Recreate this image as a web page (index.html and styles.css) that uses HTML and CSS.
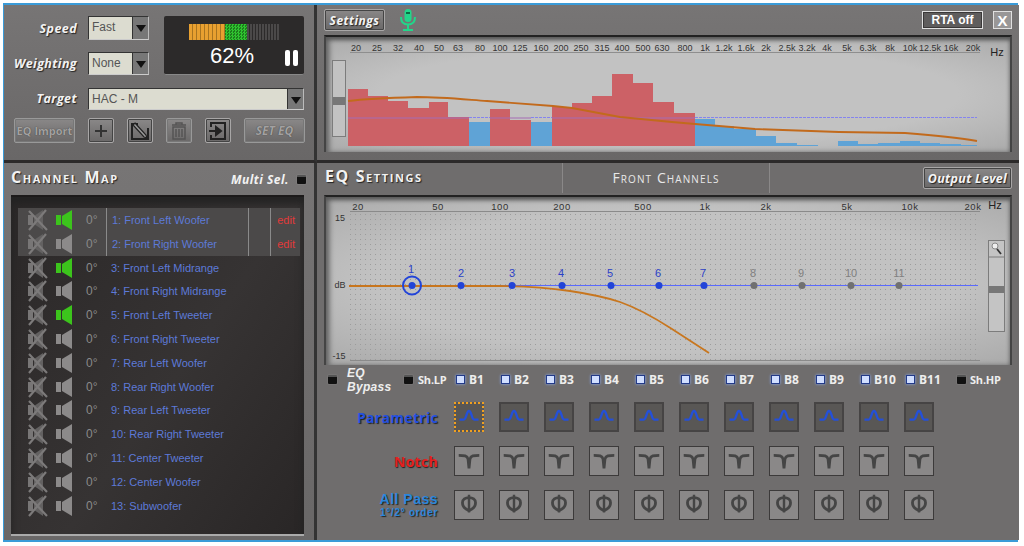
FILE: index.html
```html
<!DOCTYPE html>
<html lang="en">
<head>
    <meta charset="UTF-8">
    <title>EQ Settings</title>
    <link rel="stylesheet" href="styles.css">
</head>
<body>
    <svg class="defs" width="0" height="0">
        <symbol id="spk" viewBox="0 0 17 20">
            <rect x="0" y="5" width="5" height="10"/>
            <polygon points="6,6 16,0 16,20 6,14"/>
        </symbol>
        <symbol id="mute" viewBox="0 0 22 22">
            <rect x="2" y="6" width="5" height="10" fill="#787676"/>
            <polygon points="8,7 17,1 17,21 8,15" fill="#636161"/>
            <path d="M3 2 L21 21 M20 1 L3 21" stroke="#7c7a7a" stroke-width="2.200" fill="none"/>
        </symbol>
        <symbol id="peak" viewBox="0 0 30 30">
            <path d="M4 18 H9 C12 18 12 8 15 8 C18 8 18 18 21 18 H26" fill="none" stroke="#2450d8" stroke-width="2.800"/>
        </symbol>
        <symbol id="notch" viewBox="0 0 30 30">
            <path d="M4 9 C10 9 13 9 14 13 L15 23 L16 13 C17 9 20 9 26 9" fill="none" stroke="#454545" stroke-width="3"/>
        </symbol>
        <symbol id="allpass" viewBox="0 0 30 30">
            <path d="M15 21 C10 19 8 16 8 12.500 C8 9 11 7 15 7 C19 7 22 9 22 12.500 C22 16 20 19 15 21 Z" fill="none" stroke="#454545" stroke-width="3"/>
            <path d="M15 4 V23" stroke="#454545" stroke-width="2.600"/>
        </symbol>
    </svg>

    <div class="window">
        <!-- top left: analyser controls -->
        <div class="panel top-left">
            <div class="controls">
                <label class="ctl-label">Speed</label>
                <div class="select"><span>Fast</span><i class="drop"></i></div>
                <div class="meter">
                    <div class="meter-bar"><b class="m-orange"></b><b class="m-green"></b><b class="m-off"></b></div>
                    <div class="meter-value">62%</div>
                    <div class="pause"><b></b><b></b></div>
                </div>
                <label class="ctl-label">Weighting</label>
                <div class="select"><span>None</span><i class="drop"></i></div>
                <label class="ctl-label target-row">Target</label>
                <div class="select select-wide target-row"><span>HAC - M</span><i class="drop"></i></div>
            </div>
            <div class="tools">
                <button class="btn dim wide">EQ Import</button>
                <button class="btn sq">
                    <svg width="16" height="16" viewBox="0 0 16 16"><path d="M8 2 V14 M2 8 H14" stroke="#333" stroke-width="2"/></svg>
                </button>
                <button class="btn sq">
                    <svg width="20" height="20" viewBox="0 0 20 20"><path d="M8 3 H2 V18 H18 V7" fill="none" stroke="#222" stroke-width="2"/><path d="M5 2 L16 14 L17 17 L14 16 L3 4 Z" fill="#999" stroke="#222" stroke-width="1.200"/></svg>
                </button>
                <button class="btn sq off">
                    <svg width="16" height="18" viewBox="0 0 16 18"><path d="M1 3 H15 M5 3 V1 H11 V3" fill="none" stroke="#565454" stroke-width="1.500"/><path d="M2 5 H14 V17 H2 Z M5 7 V15 M8 7 V15 M11 7 V15" fill="none" stroke="#565454" stroke-width="1.500"/></svg>
                </button>
                <button class="btn sq">
                    <svg width="20" height="20" viewBox="0 0 20 20"><path d="M3 6 V2 H17 V18 H3 V14" fill="none" stroke="#222" stroke-width="2"/><path d="M1 10 H10 M8 6 L13 10 L8 14 Z" fill="#222" stroke="#222" stroke-width="2"/></svg>
                </button>
                <button class="btn dim wide set-eq">SET EQ</button>
            </div>
        </div>

        <!-- top right: RTA -->
        <div class="panel top-right">
            <div class="rta-head">
                <button class="btn settings">Settings</button>
                <svg class="mic" width="16" height="22" viewBox="0 0 16 22">
                    <rect x="4.500" y="0" width="7" height="13" rx="3.500" fill="#22d68a"/>
                    <path d="M1 8 C1 14 4 15.500 8 15.500 C12 15.500 15 14 15 8" fill="none" stroke="#22d68a" stroke-width="2"/>
                    <path d="M8 15 V20 M3 21 H13" stroke="#22d68a" stroke-width="2"/>
                    <rect x="6" y="3" width="4" height="2" fill="#0b6e46"/>
                </svg>
                <button class="flat rta-off">RTA off</button>
                <button class="flat close">X</button>
            </div>
            <div class="chart rta-chart">
                <svg width="686" height="117" viewBox="324 35 686 117">
                    <g class="axis-text">
                        <text x="356" y="51">20</text><text x="377" y="51">25</text><text x="398" y="51">32</text><text x="419" y="51">40</text><text x="439" y="51">50</text><text x="458" y="51">63</text><text x="480" y="51">80</text><text x="500" y="51">100</text><text x="520" y="51">125</text><text x="541" y="51">160</text><text x="561" y="51">200</text><text x="581" y="51">250</text><text x="602" y="51">315</text><text x="622" y="51">400</text><text x="643" y="51">500</text><text x="662" y="51">630</text><text x="685" y="51">800</text><text x="705" y="51">1k</text><text x="724" y="51">1.2k</text><text x="746" y="51">1.6k</text><text x="766" y="51">2k</text><text x="787" y="51">2.5k</text><text x="807" y="51">3.2k</text><text x="827" y="51">4k</text><text x="847" y="51">5k</text><text x="868" y="51">6.3k</text><text x="890" y="51">8k</text><text x="910" y="51">10k</text><text x="930" y="51">12.5k</text><text x="951" y="51">16k</text><text x="973" y="51">20k</text>
                    </g>
                    <text class="hz" x="997" y="56">Hz</text>
                    <path d="M350 52.500 H980" stroke="#8e8e8e"/>
                    <rect x="332.500" y="60.500" width="13" height="76" fill="#c2c2c2" stroke="#7c7c7c"/>
                    <rect x="333" y="97" width="12" height="8" fill="#777"/>
                    <path fill="#cc6166" d="M348 146 V89 H368 V96 H388 V101 H408 V108 H429 V102 H448 V117 H469 V146 Z M490 146 V109 H510 V120 H531 V146 Z M552 146 V107 H572 V103 H592 V96 H612 V74 H633 V83 H653 V102 H674 V113 H695 V146 Z"/>
                    <path fill="#5fa3d6" d="M469 146 V122 H490 V146 Z M531 146 V122 H552 V146 Z M695 146 V119 H715 V126 H734 V129 H756 V136 H776 V143 H797 V145 H818 V146 Z M838 146 V141 H858 V144 H878 V143 H900 V141 H920 V143 H940 V144 H961 V145 H977 V146 Z"/>
                    <path d="M348 118 H469 M490 118 H531 M552 118 H695" stroke="#a56cb4" stroke-width="1"/>
                    <path d="M469 117.500 H490 M531 117.500 H552 M695 117.500 H977" stroke="#8484ee" stroke-dasharray="3 1"/>
                    <path d="M348 101 C365 99 387 98 417 97 C440 97 460 99 487 101 L553 106 L572 108 L620 117 L672 122 L695 124 L755 129 L839 132 L905 133 C930 135 955 137 977 141" fill="none" stroke="#c26a1c" stroke-width="1.800"/>
                </svg>
            </div>
        </div>

        <!-- bottom left: channel list -->
        <div class="panel bottom-left">
            <div class="map-head">
                <h2 class="title map-title">Channel Map</h2>
                <span class="multi">Multi Sel.</span>
                <i class="led"></i>
            </div>
            <div class="channels">
                <div class="channel selected">
                    <div class="ch-icons"><svg class="i-mute"><use href="#mute"/></svg><svg class="i-spk on"><use href="#spk"/></svg><span class="deg">0°</span></div>
                    <div class="ch-name">1: Front Left Woofer</div><div class="ch-gap"></div><div class="ch-edit">edit</div>
                </div>
                <div class="channel selected">
                    <div class="ch-icons"><svg class="i-mute"><use href="#mute"/></svg><svg class="i-spk"><use href="#spk"/></svg><span class="deg">0°</span></div>
                    <div class="ch-name">2: Front Right Woofer</div><div class="ch-gap"></div><div class="ch-edit">edit</div>
                </div>
                <div class="channel">
                    <div class="ch-icons"><svg class="i-mute"><use href="#mute"/></svg><svg class="i-spk on"><use href="#spk"/></svg><span class="deg">0°</span></div>
                    <div class="ch-name">3: Front Left Midrange</div>
                </div>
                <div class="channel">
                    <div class="ch-icons"><svg class="i-mute"><use href="#mute"/></svg><svg class="i-spk"><use href="#spk"/></svg><span class="deg">0°</span></div>
                    <div class="ch-name">4: Front Right Midrange</div>
                </div>
                <div class="channel">
                    <div class="ch-icons"><svg class="i-mute"><use href="#mute"/></svg><svg class="i-spk on"><use href="#spk"/></svg><span class="deg">0°</span></div>
                    <div class="ch-name">5: Front Left Tweeter</div>
                </div>
                <div class="channel">
                    <div class="ch-icons"><svg class="i-mute"><use href="#mute"/></svg><svg class="i-spk"><use href="#spk"/></svg><span class="deg">0°</span></div>
                    <div class="ch-name">6: Front Right Tweeter</div>
                </div>
                <div class="channel">
                    <div class="ch-icons"><svg class="i-mute"><use href="#mute"/></svg><svg class="i-spk"><use href="#spk"/></svg><span class="deg">0°</span></div>
                    <div class="ch-name">7: Rear Left Woofer</div>
                </div>
                <div class="channel">
                    <div class="ch-icons"><svg class="i-mute"><use href="#mute"/></svg><svg class="i-spk"><use href="#spk"/></svg><span class="deg">0°</span></div>
                    <div class="ch-name">8: Rear Right Woofer</div>
                </div>
                <div class="channel">
                    <div class="ch-icons"><svg class="i-mute"><use href="#mute"/></svg><svg class="i-spk"><use href="#spk"/></svg><span class="deg">0°</span></div>
                    <div class="ch-name">9: Rear Left Tweeter</div>
                </div>
                <div class="channel">
                    <div class="ch-icons"><svg class="i-mute"><use href="#mute"/></svg><svg class="i-spk"><use href="#spk"/></svg><span class="deg">0°</span></div>
                    <div class="ch-name">10: Rear Right Tweeter</div>
                </div>
                <div class="channel">
                    <div class="ch-icons"><svg class="i-mute"><use href="#mute"/></svg><svg class="i-spk"><use href="#spk"/></svg><span class="deg">0°</span></div>
                    <div class="ch-name">11: Center Tweeter</div>
                </div>
                <div class="channel">
                    <div class="ch-icons"><svg class="i-mute"><use href="#mute"/></svg><svg class="i-spk"><use href="#spk"/></svg><span class="deg">0°</span></div>
                    <div class="ch-name">12: Center Woofer</div>
                </div>
                <div class="channel">
                    <div class="ch-icons"><svg class="i-mute"><use href="#mute"/></svg><svg class="i-spk"><use href="#spk"/></svg><span class="deg">0°</span></div>
                    <div class="ch-name">13: Subwoofer</div>
                </div>
            </div>
        </div>

        <!-- bottom right: EQ -->
        <div class="panel bottom-right">
            <div class="eq-head">
                <h2 class="title eq-title">EQ Settings</h2>
                <div class="eq-tab">Front Channels</div>
                <button class="btn output">Output Level</button>
            </div>
            <div class="chart eq-chart">
                <svg width="686" height="170" viewBox="324 195 686 170">
                    <defs>
                        <pattern id="dots" x="350" y="214" width="5" height="5" patternUnits="userSpaceOnUse">
                            <rect width="1" height="1" fill="#9c9c9c"/>
                        </pattern>
                    </defs>
                    <rect x="350" y="214" width="630" height="146" fill="url(#dots)"/>
                    <g class="axis-text eq-axis">
                        <text x="358" y="210">20</text><text x="438" y="210">50</text><text x="500" y="210">100</text><text x="562" y="210">200</text><text x="643" y="210">500</text><text x="705" y="210">1k</text><text x="766" y="210">2k</text><text x="847" y="210">5k</text><text x="910" y="210">10k</text><text x="973" y="210">20k</text>
                    </g>
                    <text class="hz" x="995" y="209">Hz</text>
                    <path d="M350 211.500 H980 M350 360.500 H980" stroke="#8a8a8a"/>
                    <g class="axis-text">
                        <text x="340" y="221">15</text><text x="340" y="288">dB</text><text x="339" y="359">-15</text>
                    </g>
                    <path d="M349 285.500 H978" stroke="#5a6aff"/>
                    <path d="M349 286 H500 C530 286 550 288 570 291 C590 294 605 297 620 302 C640 309 655 318 672 329 L709 353" fill="none" stroke="#c8761e" stroke-width="1.800"/>
                    <circle cx="412" cy="285.500" r="9" fill="none" stroke="#2244d8" stroke-width="2"/>
                    <g fill="#2244d8">
                        <circle cx="412" cy="285.500" r="3.500"/><circle cx="461" cy="285.500" r="3.500"/><circle cx="512" cy="285.500" r="3.500"/><circle cx="562" cy="285.500" r="3.500"/><circle cx="611" cy="285.500" r="3.500"/><circle cx="659" cy="285.500" r="3.500"/><circle cx="704" cy="285.500" r="3.500"/>
                    </g>
                    <g fill="#707070">
                        <circle cx="754" cy="285.500" r="3.500"/><circle cx="802" cy="285.500" r="3.500"/><circle cx="851" cy="285.500" r="3.500"/><circle cx="899" cy="285.500" r="3.500"/>
                    </g>
                    <g class="node-text">
                        <text x="411" y="273">1</text><text x="461" y="277">2</text><text x="512" y="277">3</text><text x="561" y="277">4</text><text x="610" y="277">5</text><text x="658" y="277">6</text><text x="703" y="277">7</text>
                    </g>
                    <g class="node-text grey">
                        <text x="753" y="277">8</text><text x="801" y="277">9</text><text x="851" y="277">10</text><text x="899" y="277">11</text>
                    </g>
                    <rect x="988.500" y="240.500" width="16" height="91" fill="#c4c4c4" stroke="#7c7c7c"/>
                    <path d="M989 257 H1004" stroke="#7c7c7c"/>
                    <circle cx="995" cy="246" r="3" fill="#eee" stroke="#888"/>
                    <path d="M997 249 L1001 254" stroke="#333" stroke-width="1.800"/>
                    <rect x="989" y="286" width="15" height="7" fill="#777"/>
                </svg>
            </div>
            <div class="bands">
                <div class="band-first">
                    <i class="led"></i><span class="bypass">EQ<br>Bypass</span>
                    <i class="led lp-led"></i><span class="check-text sh">Sh.LP</span>
                </div>
                <div class="band-check"><i class="check"></i><span class="check-text">B1</span></div>
                <div class="band-check"><i class="check"></i><span class="check-text">B2</span></div>
                <div class="band-check"><i class="check"></i><span class="check-text">B3</span></div>
                <div class="band-check"><i class="check"></i><span class="check-text">B4</span></div>
                <div class="band-check"><i class="check"></i><span class="check-text">B5</span></div>
                <div class="band-check"><i class="check"></i><span class="check-text">B6</span></div>
                <div class="band-check"><i class="check"></i><span class="check-text">B7</span></div>
                <div class="band-check"><i class="check"></i><span class="check-text">B8</span></div>
                <div class="band-check"><i class="check"></i><span class="check-text">B9</span></div>
                <div class="band-check"><i class="check"></i><span class="check-text">B10</span></div>
                <div class="band-check"><i class="check"></i><span class="check-text">B11</span></div>
                <div class="band-check band-hp"><i class="led"></i><span class="check-text sh">Sh.HP</span></div>

                <div class="type-label parametric">Parametric</div>
                <div class="f-btn active focus"><svg><use href="#peak"/></svg></div>
                <div class="f-btn active"><svg><use href="#peak"/></svg></div>
                <div class="f-btn active"><svg><use href="#peak"/></svg></div>
                <div class="f-btn active"><svg><use href="#peak"/></svg></div>
                <div class="f-btn active"><svg><use href="#peak"/></svg></div>
                <div class="f-btn active"><svg><use href="#peak"/></svg></div>
                <div class="f-btn active"><svg><use href="#peak"/></svg></div>
                <div class="f-btn active"><svg><use href="#peak"/></svg></div>
                <div class="f-btn active"><svg><use href="#peak"/></svg></div>
                <div class="f-btn active"><svg><use href="#peak"/></svg></div>
                <div class="f-btn active"><svg><use href="#peak"/></svg></div>
                <div></div>

                <div class="type-label notch">Notch</div>
                <div class="f-btn"><svg><use href="#notch"/></svg></div>
                <div class="f-btn"><svg><use href="#notch"/></svg></div>
                <div class="f-btn"><svg><use href="#notch"/></svg></div>
                <div class="f-btn"><svg><use href="#notch"/></svg></div>
                <div class="f-btn"><svg><use href="#notch"/></svg></div>
                <div class="f-btn"><svg><use href="#notch"/></svg></div>
                <div class="f-btn"><svg><use href="#notch"/></svg></div>
                <div class="f-btn"><svg><use href="#notch"/></svg></div>
                <div class="f-btn"><svg><use href="#notch"/></svg></div>
                <div class="f-btn"><svg><use href="#notch"/></svg></div>
                <div class="f-btn"><svg><use href="#notch"/></svg></div>
                <div></div>

                <div class="type-label allpass">All Pass<small>1°/2° order</small></div>
                <div class="f-btn"><svg><use href="#allpass"/></svg></div>
                <div class="f-btn"><svg><use href="#allpass"/></svg></div>
                <div class="f-btn"><svg><use href="#allpass"/></svg></div>
                <div class="f-btn"><svg><use href="#allpass"/></svg></div>
                <div class="f-btn"><svg><use href="#allpass"/></svg></div>
                <div class="f-btn"><svg><use href="#allpass"/></svg></div>
                <div class="f-btn"><svg><use href="#allpass"/></svg></div>
                <div class="f-btn"><svg><use href="#allpass"/></svg></div>
                <div class="f-btn"><svg><use href="#allpass"/></svg></div>
                <div class="f-btn"><svg><use href="#allpass"/></svg></div>
                <div class="f-btn"><svg><use href="#allpass"/></svg></div>
                <div></div>
            </div>
        </div>
    </div>
</body>
</html>
```

FILE: styles.css
```css
* {
    margin: 0;
    padding: 0;
    box-sizing: border-box;
}

body {
    background-color: #ffffff;
    font-family: "Liberation Sans", Arial, sans-serif;
    overflow: hidden;
}

.defs {
    display: block;
    height: 0;
}

.window {
    width: 1015px;
    height: 539px;
    margin: 3px 0 0 3px;
    border: 2px solid #3a9bd8;
    border-left-width: 1px;
    display: grid;
    grid-template-columns: 313px 1fr;
    grid-template-rows: 158px 1fr;
    background-color: #6f6d6d;
}

.panel {
    background: linear-gradient(#777575, #696767);
}

.top-left {
    border-right: 3px solid #333;
    border-bottom: 3px solid #2c2a2a;
    padding-top: 11px;
}

.top-right {
    border-bottom: 3px solid #2c2a2a;
}

.bottom-left {
    border-right: 3px solid #333;
    padding-left: 7px;
}

.bottom-right {
    background: #6f6d6d;
}

/* top left controls */
.controls {
    display: grid;
    grid-template-columns: 73px 61px 144px;
    grid-template-rows: 24px 23px 22px;
    column-gap: 11px;
    row-gap: 12px;
    align-items: center;
}

.ctl-label {
    font: italic bold 12.5px "Open Sans", sans-serif;
    color: #f2f2f2;
    text-align: right;
    letter-spacing: 0.4px;
    text-shadow: 1px 1px 1px #222;
}

.target-row {
    margin-top: 1px;
}

.select {
    height: 100%;
    display: flex;
    justify-content: space-between;
    background-color: #dcdcd0;
    border: 1px solid #333;
    border-right-color: #bbb;
    border-bottom-color: #ccc;
    font-size: 12px;
    color: #555;
    line-height: 21px;
    padding-left: 3px;
}

.select-wide {
    grid-column: 2 / 4;
}

.drop {
    width: 16px;
    background-color: #777;
    border-left: 1px solid #333;
    position: relative;
}

.drop::after {
    content: "";
    position: absolute;
    left: 3px;
    top: 8px;
    border-left: 5px solid transparent;
    border-right: 5px solid transparent;
    border-top: 7px solid #111;
}

.meter {
    grid-row: 1 / 3;
    grid-column: 3;
    margin-left: 4px;
    height: 59px;
    background-color: #2c2a2a;
    border-radius: 2px;
    border-bottom: 1px solid #888;
    position: relative;
    padding-top: 8px;
}

.meter-bar {
    display: flex;
    height: 16px;
    margin-left: 25px;
}

.m-orange {
    width: 36px;
    background: repeating-linear-gradient(90deg, #e8a030 0 3px, #a87420 3px 4px);
}

.m-green {
    width: 22px;
    background: repeating-conic-gradient(#2fc42f 0 25%, #1d7c1d 0 50%) 0 0 / 3px 3px;
}

.m-off {
    width: 33px;
    background: repeating-linear-gradient(90deg, #4b4949 0 2px, #2c2a2a 2px 3px);
}

.meter-value {
    font-size: 22px;
    color: #fff;
    text-align: center;
    line-height: 26px;
    margin-top: 3px;
    padding-right: 4px;
}

.pause {
    position: absolute;
    right: 6px;
    top: 34px;
    display: flex;
    gap: 3px;
}

.pause b {
    width: 5px;
    height: 16px;
    background-color: #fff;
    border-radius: 2px;
}

.tools {
    display: flex;
    gap: 13px;
    margin-top: 9px;
    padding-left: 10px;
}

.btn {
    font-family: "Open Sans", sans-serif;
    font-style: italic;
    font-weight: bold;
    color: #f4f4f4;
    background: linear-gradient(#8a8888, #6a6868);
    border: 1px solid #a8a6a6;
    box-shadow: inset 0 0 0 1px #444;
    border-radius: 2px;
    text-shadow: 1px 1px 1px #222;
}

.tools .btn {
    height: 25px;
}

.sq {
    width: 26px;
    display: flex;
    align-items: center;
    justify-content: center;
}

.wide {
    width: 61px;
    font-size: 11px;
    white-space: nowrap;
    padding: 0;
}

.dim {
    color: #a3a1a1;
    text-shadow: 0 0 1px #333;
    border-color: #999;
    box-shadow: inset 0 0 0 1px #777;
    font-style: normal;
}

.set-eq {
    font-style: italic;
    font-size: 12px;
}

.off {
    border-color: #999;
    box-shadow: inset 0 0 0 1px #777;
}

/* RTA */
.rta-head {
    display: flex;
    align-items: flex-start;
    height: 30px;
    padding: 4px 7px 0 7px;
}

.settings {
    width: 61px;
    height: 22px;
    font-size: 12px;
    letter-spacing: 0.5px;
    padding: 0;
}

.mic {
    margin-left: 15px;
}

.flat {
    font-family: "Liberation Sans", sans-serif;
    font-weight: bold;
    color: #fff;
    background-color: #5f5d5d;
    border: 1px solid #e0e0e0;
    box-shadow: inset 0 0 0 1px #3a3838;
    margin-top: 2px;
}

.rta-off {
    width: 61px;
    height: 18px;
    font-size: 12px;
    margin-left: auto;
}

.close {
    width: 19px;
    height: 18px;
    font-size: 15px;
    margin-left: 10px;
    padding: 0;
    background-color: #999797;
    box-shadow: none;
}

.chart {
    margin: 0 7px;
    background: radial-gradient(ellipse at center, #c2c2c2 60%, #aaaaaa 100%);
    border-top: 2px solid #222;
    border-right: 2px solid #444;
    border-left: 2px solid #444;
    box-shadow: inset 0 3px 4px #555, inset 4px 0 5px #777;
    position: relative;
}

.chart svg {
    display: block;
    margin: -2px 0 0 -2px;
}

.rta-chart {
    height: 117px;
}

.eq-chart {
    height: 170px;
}

.axis-text text {
    font-size: 9px;
    fill: #333;
    text-anchor: middle;
}

.eq-axis text {
    font-size: 9.5px;
    letter-spacing: 0.5px;
}

.hz {
    font-size: 11px;
    fill: #222;
    text-anchor: middle;
}

.node-text text {
    font-size: 11px;
    fill: #2a3fc8;
    text-anchor: middle;
}

.node-text.grey text {
    fill: #808080;
}

/* channel map */
.map-head {
    height: 32px;
    display: flex;
    align-items: center;
    padding: 0 8px 0 0;
}

.title {
    font: bold 16px "Open Sans", sans-serif;
    font-variant: small-caps;
    color: #f2f2f2;
    letter-spacing: 1.6px;
    text-shadow: 1px 1px 1px #222;
}

.map-title {
    margin-bottom: 4px;
}

.multi {
    font: italic bold 12px "Open Sans", sans-serif;
    color: #f2f2f2;
    margin-left: auto;
    margin-right: 8px;
    letter-spacing: 0.5px;
}

.led {
    display: inline-block;
    width: 9px;
    height: 9px;
    background: linear-gradient(#555 0 2px, #111 2px);
    border-radius: 1px;
    box-shadow: 0 0 1px #bbb;
    flex-shrink: 0;
}

.channels {
    width: 293px;
    height: 341px;
    background: linear-gradient(125deg, #2b2828, #363333 55%, #292626);
    border-top: 2px solid #1c1a1a;
    box-shadow: inset 0 6px 8px #222;
    border-bottom: 2px solid #aaa;
    padding: 11px 0 0 7px;
}

.channel {
    display: grid;
    grid-template-columns: 88px 142px 22px 30px;
    height: 23.8px;
    width: 282px;
    align-items: center;
    font-size: 11px;
}

.selected {
    background-color: #4b4949;
}

.ch-icons {
    display: flex;
    align-items: center;
    padding-left: 8px;
    gap: 8px;
}

.i-mute {
    width: 22px;
    height: 22px;
}

.i-spk {
    width: 17px;
    height: 20px;
    fill: #8c8a8a;
}

.i-spk.on {
    fill: #3cc41c;
}

.deg {
    color: #8a8a8a;
    font-size: 12px;
    margin-left: 5px;
}

.ch-name {
    color: #5d7ad8;
    padding-left: 5px;
    white-space: nowrap;
    height: 100%;
    line-height: 24px;
}

.selected .ch-name,
.selected .ch-gap,
.selected .ch-edit {
    border-left: 1px solid #8a8a8a;
    height: 100%;
}

.ch-gap {
    height: 100%;
}

.ch-edit {
    color: #e23a3a;
    text-align: right;
    padding-right: 5px;
    line-height: 24px;
}

/* EQ */
.eq-head {
    display: flex;
    align-items: flex-start;
    height: 32px;
}

.eq-title {
    width: 245px;
    padding: 2px 0 0 8px;
}

.eq-tab {
    width: 208px;
    height: 30px;
    border-left: 1px solid #8a8888;
    border-right: 1px solid #8a8888;
    background-color: #6c6a6a;
    color: #e8e8e8;
    font: 14px "Open Sans", sans-serif;
    font-variant: small-caps;
    letter-spacing: 1.100px;
    text-align: center;
    line-height: 30px;
}

.output {
    width: 89px;
    height: 22px;
    font-size: 12.5px;
    margin: 4px 7px 0 auto;
    padding: 0;
    white-space: nowrap;
    letter-spacing: 0.3px;
}

.bands {
    display: grid;
    grid-template-columns: 130px repeat(11, 45px) 1fr;
    grid-template-rows: 17px 30px 30px 30px;
    row-gap: 14px;
    padding-left: 7px;
    margin-top: 6px;
    align-items: center;
}

.band-first {
    display: flex;
    align-items: center;
    padding-left: 4px;
    height: 17px;
}

.bypass {
    font: italic bold 12px/14px "Liberation Sans", sans-serif;
    color: #eee;
    margin-left: 10px;
    width: 57px;
    letter-spacing: 0.3px;
}

.lp-led {
    margin-right: 5px;
}

.band-check {
    display: flex;
    align-items: center;
    padding-left: 2px;
}

.band-hp {
    padding-left: 8px;
}

.band-hp .led {
    margin-right: 4px;
}

.check {
    width: 9px;
    height: 9px;
    background-color: #d0deff;
    border: 1px solid #223a88;
    box-shadow: 0 0 3px #8fb0ff;
    margin-right: 4px;
}

.check-text {
    font: bold 12px "Open Sans", sans-serif;
    color: #eee;
    white-space: nowrap;
}

.check-text.sh {
    font-size: 11px;
    letter-spacing: -0.2px;
}

.type-label {
    font: bold 14px "Open Sans", sans-serif;
    text-align: right;
    padding-right: 16px;
    letter-spacing: 0.3px;
    text-shadow: 1px 1px 1px #222;
}

.type-label small {
    display: block;
    font-size: 10px;
    line-height: 12px;
    letter-spacing: 0.7px;
}

.parametric {
    color: #2450e0;
}

.notch {
    color: #e42020;
}

.allpass {
    color: #2a86dc;
    font: bold 14px/16px "Liberation Sans", sans-serif;
    letter-spacing: 0.5px;
}

.f-btn {
    width: 30px;
    height: 30px;
    background-color: #8a8888;
    border: 1px solid #3c3a3a;
}

.f-btn svg {
    display: block;
    width: 28px;
    height: 28px;
}

.f-btn.active {
    background-color: #595755;
    border: 2px solid #464444;
}

.f-btn.active svg {
    width: 26px;
    height: 26px;
}

.f-btn.focus {
    border: 2px dotted #f0a020;
}
```
